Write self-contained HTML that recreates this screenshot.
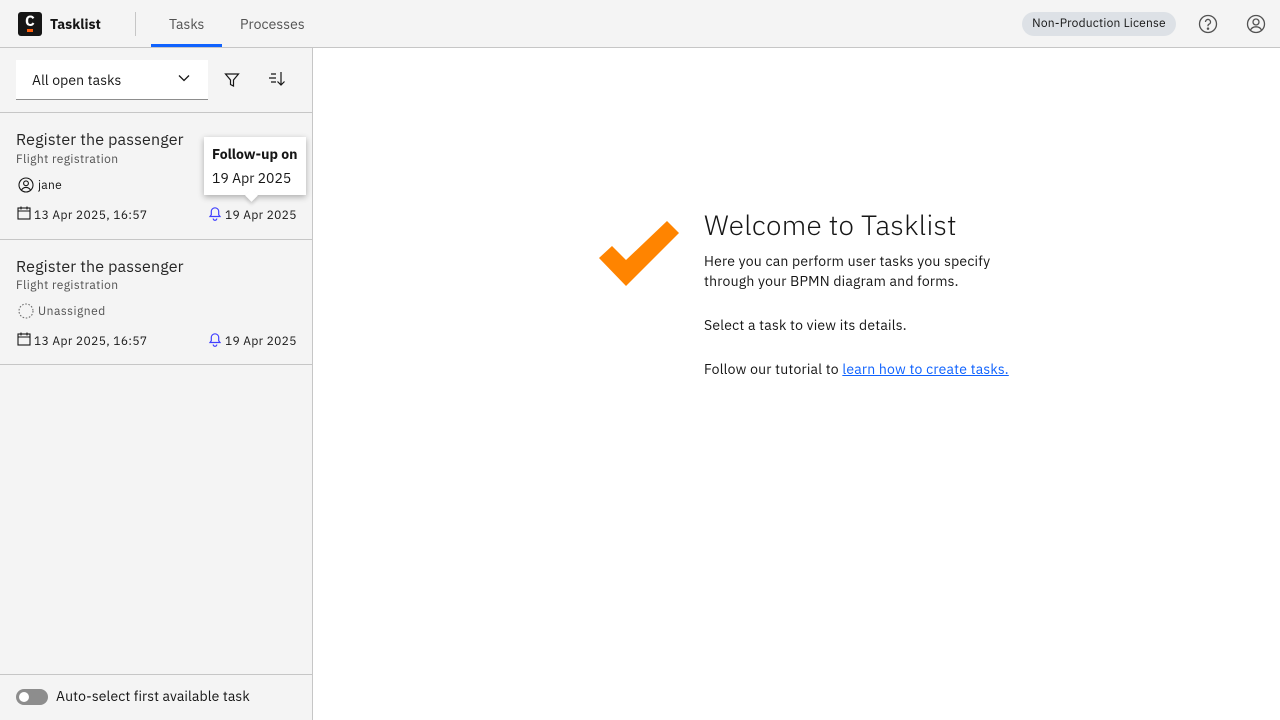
<!DOCTYPE html>
<html><head><meta charset="utf-8"><style>
*{box-sizing:border-box;margin:0;padding:0}
body{width:1280px;height:720px;overflow:hidden;font-family:"IBM Plex Sans","Liberation Sans",sans-serif;color:#161616;background:#fff;position:relative}
.hdr{position:absolute;left:0;top:0;width:1280px;height:48px;background:#f4f4f4;border-bottom:1px solid #c6c6c6}
.abs{position:absolute}
.side{position:absolute;left:0;top:48px;width:313px;height:672px;background:#f4f4f4;border-right:1px solid #c6c6c6}
.t{position:absolute;white-space:nowrap}
.card{position:absolute;left:0;width:312px;border-bottom:1px solid #c6c6c6}
</style></head><body>
<div class="hdr">
  <div class="abs" style="left:18px;top:12px;width:24px;height:24px;background:#161616;border-radius:3px"></div>
  <div class="t" style="left:25px;top:12px;color:#fff;font-weight:bold;font-size:15px">C</div>
  <div class="abs" style="left:27px;top:29px;width:6px;height:3px;background:#fc5d0d"></div>
  <div class="t" style="left:50px;top:15px;font-weight:bold;font-size:14px">Tasklist</div>
  <div class="abs" style="left:135px;top:12px;width:1px;height:24px;background:#c6c6c6"></div>
  <div class="t" style="left:169px;top:15px;font-size:14px;color:#525252">Tasks</div>
  <div class="abs" style="left:151px;top:44px;width:71px;height:3px;background:#0f62fe"></div>
  <div class="t" style="left:240px;top:15px;font-size:14px;color:#525252;letter-spacing:.1px">Processes</div>
  <div class="t" style="left:1022px;top:12px;height:24px;width:154px;background:#dde1e6;border-radius:12px;font-size:12px;line-height:24px;text-align:center;letter-spacing:.2px">Non-Production License</div>
  <svg class="abs" style="left:1198px;top:14px" width="20" height="20" viewBox="0 0 20 20" fill="none" stroke="#525252" stroke-width="1.3"><circle cx="10" cy="10" r="8.5"/><path d="M7.5 8a2.5 2.5 0 1 1 3.3 2.3c-.6.3-.8.7-.8 1.4v.6"/><circle cx="10" cy="14.6" r=".6" fill="#525252"/></svg>
  <svg class="abs" style="left:1246px;top:14px" width="20" height="20" viewBox="0 0 20 20" fill="none" stroke="#525252" stroke-width="1.3"><circle cx="10" cy="10" r="8.5"/><circle cx="10" cy="8" r="3"/><path d="M4.5 16c1-2.2 3-3.2 5.5-3.2s4.5 1 5.5 3.2"/></svg>
</div>
<div class="side">
  <div class="abs" style="left:16px;top:12px;width:192px;height:40px;background:#fff;border-bottom:1px solid #8d8d8d"></div>
  <div class="t" style="left:32px;top:23px;font-size:14px;letter-spacing:.1px">All open tasks</div>
  <svg class="abs" style="left:177px;top:25px" width="14" height="10" viewBox="0 0 14 10" fill="none" stroke="#161616" stroke-width="1.3"><path d="M2 2.5l5 5 5-5"/></svg>
  <svg class="abs" style="left:224px;top:24px" width="16" height="16" viewBox="0 0 16 16" fill="none" stroke="#161616" stroke-width="1.2"><path d="M1.5 2h13L9.5 8v6l-3-1.5V8z"/></svg>
  <svg class="abs" style="left:268px;top:23px" width="18" height="16" viewBox="0 0 18 16" fill="none" stroke="#161616" stroke-width="1.2"><path d="M3 3h5M1 7h7M3 11h5M13 1v13M9.5 10.5l3.5 3.5 3.5-3.5"/></svg>
  <div class="abs" style="left:0;top:64px;width:312px;height:1px;background:#c6c6c6"></div>
  <div class="card" style="top:65px;height:127px">
    <div class="t" style="left:16px;top:17px;font-size:16px;color:#262626;letter-spacing:.15px">Register the passenger</div>
    <div class="t" style="left:16px;top:39px;font-size:12px;color:#525252;letter-spacing:.4px">Flight registration</div>
    <svg class="abs" style="left:18px;top:64px" width="16" height="16" viewBox="0 0 16 16" fill="none" stroke="#161616" stroke-width="1.1"><circle cx="8" cy="8" r="7"/><circle cx="8" cy="6.3" r="2.4"/><path d="M3.6 13c.9-1.8 2.4-2.6 4.4-2.6s3.5.8 4.4 2.6"/></svg>
    <div class="t" style="left:38px;top:65px;font-size:12px;letter-spacing:.3px">jane</div>
    <svg class="abs" style="left:17px;top:93px" width="15" height="15" viewBox="0 0 15 15" fill="none" stroke="#161616" stroke-width="1.1"><rect x="1" y="2" width="12" height="11"/><path d="M1 5h12M4 0.5v3M10 0.5v3"/></svg>
    <div class="t" style="left:34px;top:95px;font-size:12px;letter-spacing:.4px">13 Apr 2025, 16:57</div>
    <svg class="abs" style="left:207px;top:92px" width="16" height="16" viewBox="0 0 16 16" fill="none" stroke="#4040ff" stroke-width="1.2"><path d="M3 11.5h10l-1.3-1.8V6.5a3.7 3.7 0 0 0-7.4 0v3.2zM6.2 13.5a1.8 1.8 0 0 0 3.6 0"/></svg>
    <div class="t" style="left:225px;top:95px;font-size:12px;letter-spacing:.35px">19 Apr 2025</div>
  </div>
  <div class="abs" style="left:204px;top:89px;width:102px;height:58px;background:#fff;box-shadow:0 2px 6px rgba(0,0,0,.3)"></div>
  <div class="abs" style="left:247px;top:143px;width:9px;height:9px;background:#fff;transform:rotate(45deg);box-shadow:2px 2px 3px rgba(0,0,0,.15)"></div>
  <div class="t" style="left:212px;top:97px;font-size:14px;font-weight:bold">Follow-up on</div>
  <div class="t" style="left:212px;top:121px;font-size:14px">19 Apr 2025</div>
  <div class="card" style="top:192px;height:125px">
    <div class="t" style="left:16px;top:17px;font-size:16px;color:#262626;letter-spacing:.15px">Register the passenger</div>
    <div class="t" style="left:16px;top:38px;font-size:12px;color:#525252;letter-spacing:.4px">Flight registration</div>
    <svg class="abs" style="left:18px;top:63px" width="16" height="16" viewBox="0 0 16 16" fill="none" stroke="#6f6f6f" stroke-width="1.1" stroke-dasharray="1.6 1.6"><circle cx="8" cy="8" r="7"/></svg>
    <div class="t" style="left:38px;top:64px;font-size:12px;color:#525252;letter-spacing:.5px">Unassigned</div>
    <svg class="abs" style="left:17px;top:92px" width="15" height="15" viewBox="0 0 15 15" fill="none" stroke="#161616" stroke-width="1.1"><rect x="1" y="2" width="12" height="11"/><path d="M1 5h12M4 0.5v3M10 0.5v3"/></svg>
    <div class="t" style="left:34px;top:94px;font-size:12px;letter-spacing:.4px">13 Apr 2025, 16:57</div>
    <svg class="abs" style="left:207px;top:91px" width="16" height="16" viewBox="0 0 16 16" fill="none" stroke="#4040ff" stroke-width="1.2"><path d="M3 11.5h10l-1.3-1.8V6.5a3.7 3.7 0 0 0-7.4 0v3.2zM6.2 13.5a1.8 1.8 0 0 0 3.6 0"/></svg>
    <div class="t" style="left:225px;top:94px;font-size:12px;letter-spacing:.35px">19 Apr 2025</div>
  </div>
  <div class="abs" style="left:0;top:626px;width:312px;height:1px;background:#c6c6c6"></div>
  <div class="abs" style="left:16px;top:641px;width:32px;height:16px;border-radius:8px;background:#8d8d8d"></div>
  <div class="abs" style="left:19px;top:644px;width:10px;height:10px;border-radius:5px;background:#fff"></div>
  <div class="t" style="left:56px;top:639px;font-size:14px;letter-spacing:.1px">Auto-select first available task</div>
</div>
<svg class="abs" style="left:590px;top:210px" width="100" height="85" viewBox="590 210 100 85"><polygon points="599,258 612,246 626,260 667,221 679,233 626,286" fill="#ff8400"/></svg>
<div class="t" style="left:704px;top:206px;font-size:28px;font-weight:300;letter-spacing:.3px">Welcome to Tasklist</div>
<div class="t" style="left:704px;top:251px;font-size:14px;line-height:20px;letter-spacing:.2px">Here you can perform user tasks you specify<br>through your BPMN diagram and forms.</div>
<div class="t" style="left:704px;top:315px;font-size:14px;line-height:20px;letter-spacing:.2px">Select a task to view its details.</div>
<div class="t" style="left:704px;top:359px;font-size:14px;line-height:20px;letter-spacing:.2px">Follow our tutorial to <span style="color:#0f62fe;text-decoration:underline">learn how to create tasks.</span></div>
</body></html>
